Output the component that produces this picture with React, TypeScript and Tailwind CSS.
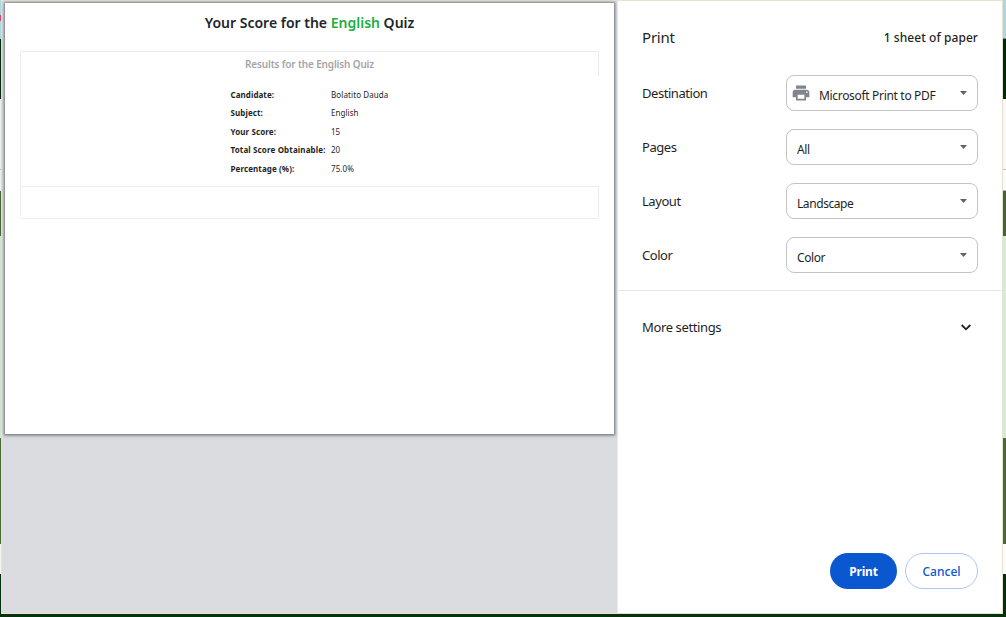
import type { ReactNode } from "react";

const results = [
  { label: "Candidate:", value: "Bolatito Dauda", labelClass: "tracking-[0.06px]", valueClass: "tracking-[0.1px]" },
  { label: "Subject:", value: "English", labelClass: "tracking-[0.1px]", valueClass: "tracking-[0.04px]" },
  { label: "Your Score:", value: "15", labelClass: "tracking-[0.1px]", valueClass: "tracking-[0.04px]" },
  { label: "Total Score Obtainable:", value: "20", labelClass: "tracking-[0.13px]", valueClass: "tracking-[0.04px]" },
  { label: "Percentage (%):", value: "75.0%", labelClass: "tracking-[0.1px]", valueClass: "tracking-[0.1px]" },
];

function PrinterIcon() {
  return (
    <svg className="-mt-px h-[20px] w-[20px] shrink-0" viewBox="0 0 24 24" fill="#80868b">
      <path d="M19 8H5c-1.66 0-3 1.34-3 3v6h4v4h12v-4h4v-6c0-1.66-1.34-3-3-3zm-3 11H8v-5h8v5zm3-7c-.55 0-1-.45-1-1s.45-1 1-1 1 .45 1 1-.45 1-1 1zm-1-9H6v4h12V3z" />
    </svg>
  );
}

function Setting({ label, value, icon }: { label: string; value: string; icon?: ReactNode }) {
  return (
    <div className="flex h-[54px] items-center justify-between pr-6 pl-6">
      <span className="text-[13px] leading-[18px] tracking-[-0.45px]">{label}</span>
      <div
        className={`flex h-9 w-48 items-center rounded-lg border border-[#c4c4c4] pr-[10px] ${icon ? "pl-1" : "pl-[10px]"}`}
      >
        {icon}
        <span
          className={`flex-1 pt-[5px] text-[12px] leading-[16px] whitespace-nowrap ${icon ? "pl-2 tracking-[-0.32px]" : "tracking-[-0.42px]"}`}
        >
          {value}
        </span>
        <svg className="h-1 w-[7px]" viewBox="0 0 7 4" fill="#5f6368">
          <path d="M0 0h7L3.5 4z" />
        </svg>
      </div>
    </div>
  );
}

function LeftEdge() {
  return (
    <div className="flex w-px flex-col">
      <div className="h-[15px] bg-[#a9d8df]" />
      <div className="h-[6px] bg-[#e0486f]" />
      <div className="h-[18px] bg-[#a9d8df]" />
      <div className="h-[60px] bg-[#062e08]" />
      <div className="h-[70px] bg-[#eeeeea]" />
      <div className="h-px bg-[#b9b9b5]" />
      <div className="h-[21px] bg-[#eeeeea]" />
      <div className="h-[45px] bg-[#486731]" />
      <div className="h-[202px] bg-[#cfe8cc]" />
      <div className="h-[106px] bg-[#486731]" />
      <div className="h-[30px] bg-[#f4f4f0]" />
      <div className="flex-1 bg-[#03300a]" />
    </div>
  );
}

function RightEdge() {
  return (
    <div className="flex w-[3px] flex-col">
      <div className="h-[38px] bg-[#a9d8df]" />
      <div className="h-px bg-[#6f9d99]" />
      <div className="h-[60px] bg-[#002d02]" />
      <div className="h-[70px] bg-[#f8f8f8]" />
      <div className="h-px bg-[#c4c4c4]" />
      <div className="h-[20px] bg-[#fafafa]" />
      <div className="h-px bg-[#bdbdbd]" />
      <div className="h-[45px] bg-[#456431]" />
      <div className="h-[202px] bg-[#d3edcf]" />
      <div className="h-[106px] bg-[#4a6a35]" />
      <div className="h-[30px] bg-[#fbfbfb]" />
      <div className="flex-1 bg-[#03300a]" />
    </div>
  );
}

export default function App() {
  return (
    <div className="flex h-[617px] w-[1006px] flex-col overflow-hidden bg-[#07320e] font-['Noto_Sans',sans-serif] text-[#1f1f1f]">
      <div className="flex h-[614px]">
        <LeftEdge />
        <div className="flex w-[1002px] border border-[#e7e1cf] bg-white">
          <div className="w-[616px] border-r border-[#e8eaed] bg-[#dadce0] pt-[2px] pl-[3px]">
            <div className="h-[431px] w-[609px] bg-white pt-[10px] shadow-[0_0_2px_1px_rgba(80,85,95,0.5),0_1px_3px_1px_rgba(60,64,67,0.35)]">
              <h1 className="text-center text-[14px] leading-[20px] font-semibold whitespace-nowrap text-[#212529]">
                Your Score for the <span className="text-[#20ad3f]">English</span> Quiz
              </h1>
              <div className="mt-[18px] ml-[15px] flex h-[168px] w-[579px] flex-col rounded-[2px] border-l border-[#ececec]">
                <div className="h-[25px] border-t border-r border-[#ececec] pt-[4px] text-center text-[10px] leading-[16px] font-semibold tracking-[-0.16px] text-[#a5a5a5]">
                  Results for the English Quiz
                </div>
                <div className="flex h-[110px] flex-col pt-[9.6px] pl-[209.5px] text-[8px]">
                  {results.map((r) => (
                    <div key={r.label} className="flex h-[18.5px] shrink-0 items-center whitespace-nowrap">
                      <span className={`w-[100.5px] font-bold ${r.labelClass}`}>{r.label}</span>
                      <span className={r.valueClass}>{r.value}</span>
                    </div>
                  ))}
                </div>
                <div className="flex-1 rounded-br-[2px] border-t border-r border-b border-[#ececec]" />
              </div>
            </div>
          </div>
          <div className="flex flex-1 flex-col">
            <div className="flex h-[65px] items-center justify-between px-6 pt-[8px]">
              <span className="-mt-[2px] text-[15px] leading-[20px] tracking-[-0.2px]">Print</span>
              <span className="text-[12px] leading-[20px] font-medium tracking-[0.06px]">1 sheet of paper</span>
            </div>
            <Setting label="Destination" value="Microsoft Print to PDF" icon={<PrinterIcon />} />
            <Setting label="Pages" value="All" />
            <Setting label="Layout" value="Landscape" />
            <Setting label="Color" value="Color" />
            <div className="mt-[8px] h-px bg-[#e4e5e7]" />
            <div className="flex h-[72px] items-center justify-between pr-[31px] pl-6">
              <span className="text-[13px] leading-[18px] tracking-[-0.38px]">More settings</span>
              <svg className="h-[7px] w-[10px]" viewBox="0 0 10 7" fill="none" stroke="#1f1f1f" strokeWidth="1.8">
                <path d="M.7 1l4.3 4.3L9.300 1" />
              </svg>
            </div>
            <div className="mt-auto flex justify-end gap-2 pr-6 pb-6">
              <button className="h-9 w-[67px] rounded-full bg-[#0b57d0] pt-[2px] text-[12px] font-bold tracking-[-0.2px] text-white">
                Print
              </button>
              <button className="h-9 w-[73px] rounded-full border border-[#a8c7fa] pt-[2px] text-[12px] font-medium text-[#0b57d0]">
                Cancel
              </button>
            </div>
          </div>
        </div>
        <RightEdge />
      </div>
    </div>
  );
}
